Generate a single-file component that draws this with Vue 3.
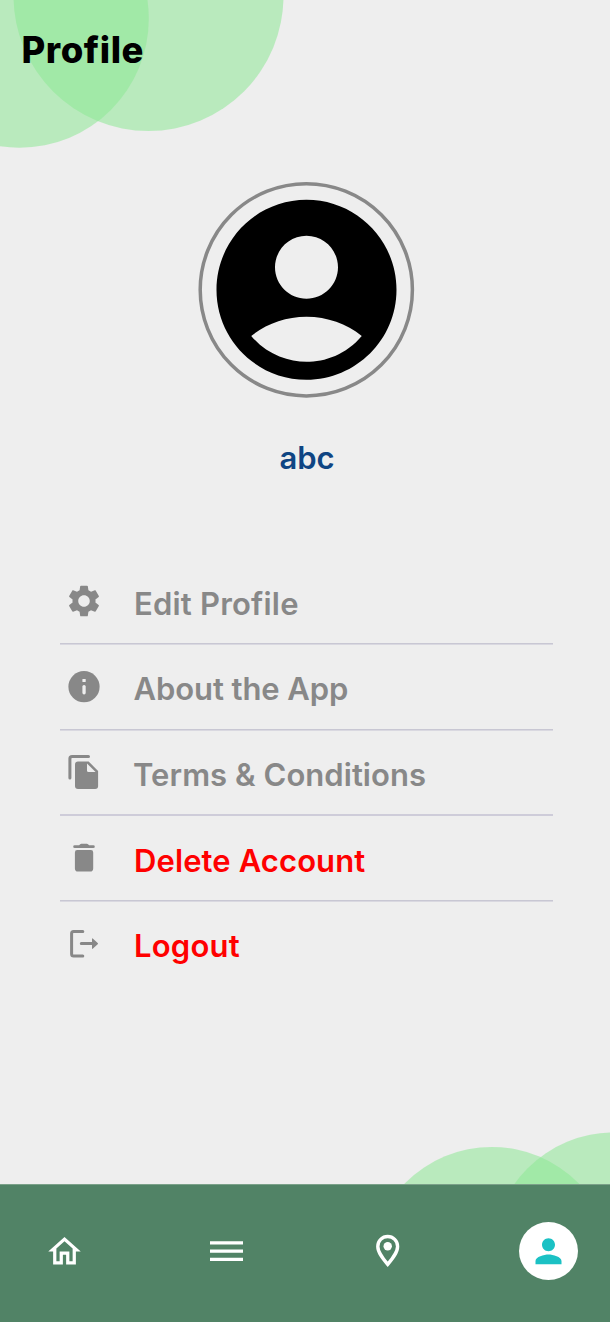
<script setup>
import { ref } from 'vue'

const items = [
  { id: 'edit', label: 'Edit Profile' },
  { id: 'about', label: 'About the App' },
  { id: 'terms', label: 'Terms & Conditions' },
  { id: 'delete', label: 'Delete Account', danger: true },
  { id: 'logout', label: 'Logout', danger: true },
]
const tabs = ['home', 'menu', 'places', 'profile']
const active = ref('profile')
</script>

<template>
  <div class="screen">
    <svg class="bubbles" viewBox="0 0 610 1322" aria-hidden="true">
      <circle cx="148.5" cy="-4" r="135" />
      <circle cx="19.5" cy="18.5" r="129.3" />
      <circle cx="491.8" cy="1269.5" r="122.5" />
      <circle cx="614" cy="1255" r="122.5" />
    </svg>

    <header class="header"><h1>Profile</h1></header>

    <section class="user">
      <div class="avatar">
        <svg viewBox="-0.055 0.02 24 24">
          <path d="M12 2C6.48 2 2 6.48 2 12s4.48 10 10 10 10-4.48 10-10S17.52 2 12 2zm0 4c1.93 0 3.5 1.57 3.5 3.5S13.93 13 12 13s-3.5-1.57-3.5-3.5S10.07 6 12 6zm0 14c-2.03 0-4.43-.82-6.14-2.88C7.55 15.8 9.68 15 12 15s4.45.8 6.14 2.12C16.43 19.18 14.03 20 12 20z" />
        </svg>
        <svg class="ring" viewBox="0 0 216 216"><circle cx="108.3" cy="107.8" r="106.1" /></svg>
      </div>
      <p class="name">abc</p>
    </section>

    <ul class="list">
      <li v-for="item in items" :key="item.id" class="row" :class="item.id">
        <svg v-if="item.id === 'edit'" class="icon" viewBox="0 0 40 40">
          <path transform="translate(.8 .8) scale(1.6)" d="M19.14 12.94c.04-.3.06-.61.06-.94 0-.32-.02-.64-.07-.94l2.03-1.58c.18-.14.23-.41.12-.61l-1.92-3.32c-.12-.22-.37-.29-.59-.22l-2.39.96c-.5-.38-1.03-.7-1.62-.94l-.36-2.54c-.04-.24-.24-.41-.48-.41h-3.84c-.24 0-.43.17-.47.41l-.36 2.54c-.59.24-1.13.57-1.62.94l-2.39-.96c-.22-.08-.47 0-.59.22L2.74 8.87c-.12.21-.08.47.12.61l2.03 1.58c-.05.3-.09.63-.09.94s.02.64.07.94l-2.03 1.58c-.18.14-.23.41-.12.61l1.92 3.32c.12.22.37.29.59.22l2.39-.96c.5.38 1.03.7 1.62.94l.36 2.54c.05.24.24.41.48.41h3.84c.24 0 .44-.17.47-.41l.36-2.54c.59-.24 1.13-.56 1.62-.94l2.39.96c.22.08.47 0 .59-.22l1.92-3.32c.12-.22.07-.47-.12-.61l-2.01-1.58zM12 15.6c-1.98 0-3.6-1.62-3.6-3.6s1.62-3.6 3.6-3.6 3.6 1.62 3.6 3.6-1.62 3.6-3.6 3.6z" />
        </svg>
        <svg v-else-if="item.id === 'about'" class="icon" viewBox="0 0 40 40">
          <circle cx="20" cy="19.7" r="15.6" />
          <rect class="cut" x="18.4" y="11.9" width="3.3" height="3.1" rx=".6" />
          <rect class="cut" x="18.4" y="18" width="3.3" height="9.4" rx="1.6" />
        </svg>
        <svg v-else-if="item.id === 'terms'" class="icon" viewBox="0 0 40 40">
          <path class="line" d="M5.9 26V6.6q0-2.2 2.2-2.2H24.5" />
          <path d="M14 9.4h10.6L34.1 19v15.1q0 3-3 3H14q-3 0-3-3V12.4q0-3 3-3z" />
          <path class="cut" d="M23 11.6V18.4q0 1.6 1.6 1.6H31.6z" />
        </svg>
        <svg v-else-if="item.id === 'delete'" class="icon" viewBox="0 0 40 40">
          <path d="M16.2 6.2q.5-.4 1.1-.4h5.6q.6 0 1.1.4l1.1 1.1h4.2q1.5 0 1.5 1.4t-1.5 1.4H10.7q-1.5 0-1.5-1.4t1.5-1.4h4.4z" />
          <path d="M13.2 12.1h13.7q2.3 0 2.3 2.3v16.1q0 3.1-3.1 3.1H14q-3.1 0-3.1-3.1V14.4q0-2.3 2.3-2.3z" />
        </svg>
        <svg v-else class="icon" viewBox="0 0 40 40">
          <path class="line" d="M18.8 7.5H9.6q-2 0-2 2v20.4q0 2 2 2h9.2M17.3 19.6H29" />
          <path d="M28 15.1q0-1.4 1-.4l4.7 4.2q.7.7 0 1.4L29 24.6q-1 .9-1-.4z" />
        </svg>
        <span class="label" :class="{ danger: item.danger }">{{ item.label }}</span>
      </li>
    </ul>

    <nav class="nav">
      <button v-for="tab in tabs" :key="tab" class="tab" :class="{ active: active === tab }" :aria-label="tab" @click="active = tab">
        <svg v-if="tab === 'home'" viewBox="0 0 24 24">
          <path d="M12 5.69l5 4.5V18h-2v-6H9v6H7v-7.81l5-4.5M12 3L2 12h3v8h6v-6h2v6h6v-8h3L12 3z" />
        </svg>
        <svg v-else-if="tab === 'menu'" viewBox="0 0 39 39">
          <path d="M4 9.2h33v3.2H4zM4 17.5h33v3.2H4zM4 25.8h33v3.2H4z" />
        </svg>
        <svg v-else-if="tab === 'places'" viewBox="0 0 39 39">
          <path class="outline" d="M19.7 4.5c-5.5 0-9.9 4.4-9.9 9.9 0 5.9 4.9 11.9 9.9 18 5-6.1 9.9-12.1 9.9-18 0-5.5-4.4-9.9-9.9-9.9z" />
          <circle cx="19.7" cy="14.2" r="4.2" />
        </svg>
        <svg v-else viewBox="0 0.2 24 24">
          <path d="M12 12c2.21 0 4-1.79 4-4s-1.79-4-4-4-4 1.79-4 4 1.79 4 4 4zm0 2c-2.67 0-8 1.34-8 4v2h16v-2c0-2.66-5.33-4-8-4z" />
        </svg>
      </button>
    </nav>
  </div>
</template>

<style>
body { background: #eee; }
</style>

<style scoped>
.screen {
  position: relative;
  display: flex;
  flex-direction: column;
  width: 610px;
  height: 1322px;
  overflow: hidden;
  background: #eee;
  font-family: Inter, "Liberation Sans", sans-serif;
}
.bubbles {
  position: absolute;
  inset: 0;
  width: 610px;
  height: 1322px;
  fill: rgba(142, 232, 150, 0.55);
}
.header, .user, .list, .nav { position: relative; }
.header { height: 182px; box-sizing: border-box; padding: 28px 0 0 21.5px; }
h1 {
  margin: 0;
  font-size: 36.5px;
  line-height: 44px;
  font-weight: 800;
  letter-spacing: 0.55px;
  color: #000;
}
.user {
  display: flex;
  flex-direction: column;
  align-items: center;
  height: 377px;
  padding-left: 3px;
}
.avatar {
  display: grid;
  width: 216px;
  height: 216px;
  margin-left: -1px;
}
.avatar svg { grid-area: 1 / 1; width: 216px; height: 216px; overflow: visible; }
.avatar .ring { fill: none; stroke: #888; stroke-width: 3.5; }
.name {
  margin: 40px 0 0 1px;
  font-size: 31px;
  line-height: 40px;
  font-weight: 600;
  color: #0f4583;
}
.list {
  margin: 0 57px 0 60px;
  padding: 0;
  list-style: none;
}
.row {
  display: flex;
  align-items: flex-start;
  gap: 30px;
  height: 86px;
  box-sizing: border-box;
  padding: 22px 0 0 4px;
  background: linear-gradient(#c8c7d3 50%, #d9d8e0 50%) left bottom / 100% 2px no-repeat;
}
.row.terms { height: 85px; padding-top: 21px; background-image: linear-gradient(#ceccd9, #ceccd9); }
.row.logout { background: none; }
.icon { flex: none; width: 40px; height: 40px; fill: #888; }
.cut { fill: #eee; }
.line { fill: none; stroke: #888; stroke-width: 3; stroke-linecap: round; }
.label {
  padding-top: 3px;
  font-size: 31px;
  line-height: 40px;
  font-weight: 600;
  letter-spacing: 0.1px;
  white-space: nowrap;
  color: #888;
}
.edit .label { letter-spacing: 0.2px; }
.about .label { padding-top: 2px; margin-left: -0.5px; letter-spacing: -0.08px; }
.terms .label { margin-left: -1px; letter-spacing: 0.05px; }
.logout .label { padding-top: 2px; letter-spacing: 0.2px; }
.label.danger { color: #f00; }
.nav {
  display: flex;
  justify-content: space-between;
  align-items: flex-start;
  height: 138px;
  box-sizing: border-box;
  margin-top: auto;
  padding: 37px 32px 0 35px;
  border-top: 1px solid #7ba189;
  background: #518366;
  background-clip: padding-box;
}
.tab {
  display: grid;
  place-items: center;
  width: 59px;
  height: 58px;
  padding: 0;
  border: 0;
  border-radius: 50%;
  background: none;
}
.tab svg { width: 39px; height: 39px; fill: #fff; }
.tab.active { background: #fff; }
.tab.active svg { fill: #1bc1c4; }
.tab .outline { fill: none; stroke: #fff; stroke-width: 3.4; }
</style>
